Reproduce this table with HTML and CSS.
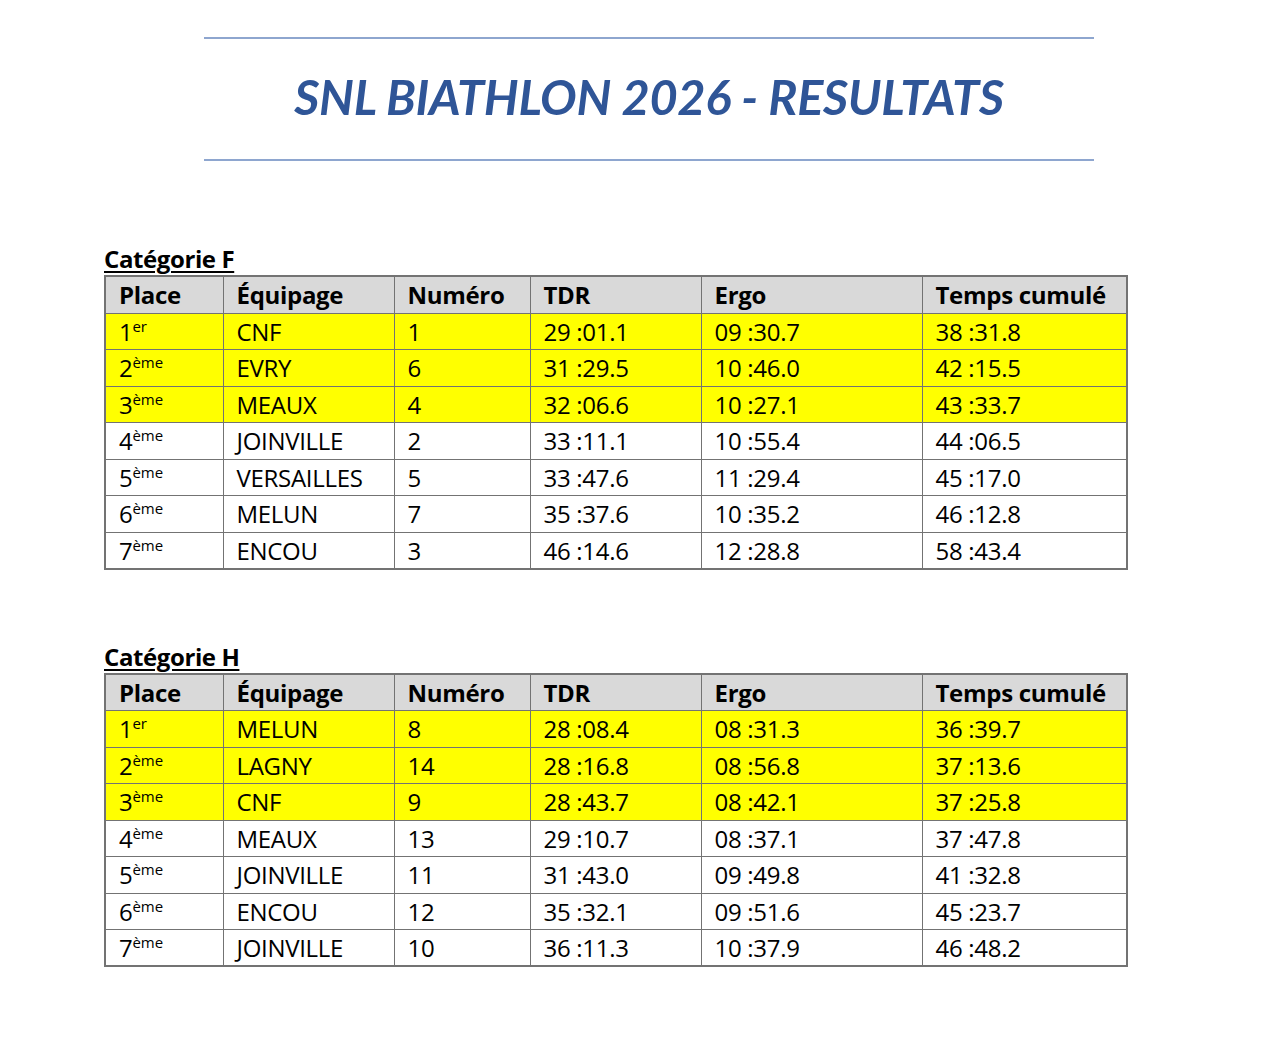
FILE: index.html
```html
<!DOCTYPE html>
<html lang="fr">
<head>
<meta charset="utf-8">
<title>SNL Biathlon 2026 - Résultats</title>
<link rel="stylesheet" href="styles.css">
</head>
<body>
<div class="page">
  <header class="banner">
    <h1 class="title">SNL BIATHLON 2026 - RESULTATS</h1>
  </header>

  <section class="cat cat-f">
    <h2 class="cat-title">Catégorie F</h2>
    <table class="results">
      <colgroup>
        <col class="c1"><col class="c2"><col class="c3"><col class="c4"><col class="c5"><col class="c6">
      </colgroup>
      <thead>
        <tr><th>Place</th><th>Équipage</th><th>Numéro</th><th>TDR</th><th>Ergo</th><th>Temps cumulé</th></tr>
      </thead>
      <tbody>
        <tr class="podium"><td>1<sup>er</sup></td><td>CNF</td><td>1</td><td>29 :01.1</td><td>09 :30.7</td><td>38 :31.8</td></tr>
        <tr class="podium"><td>2<sup>ème</sup></td><td>EVRY</td><td>6</td><td>31 :29.5</td><td>10 :46.0</td><td>42 :15.5</td></tr>
        <tr class="podium"><td>3<sup>ème</sup></td><td>MEAUX</td><td>4</td><td>32 :06.6</td><td>10 :27.1</td><td>43 :33.7</td></tr>
        <tr><td>4<sup>ème</sup></td><td>JOINVILLE</td><td>2</td><td>33 :11.1</td><td>10 :55.4</td><td>44 :06.5</td></tr>
        <tr><td>5<sup>ème</sup></td><td>VERSAILLES</td><td>5</td><td>33 :47.6</td><td>11 :29.4</td><td>45 :17.0</td></tr>
        <tr><td>6<sup>ème</sup></td><td>MELUN</td><td>7</td><td>35 :37.6</td><td>10 :35.2</td><td>46 :12.8</td></tr>
        <tr><td>7<sup>ème</sup></td><td>ENCOU</td><td>3</td><td>46 :14.6</td><td>12 :28.8</td><td>58 :43.4</td></tr>
      </tbody>
    </table>
  </section>

  <section class="cat cat-h">
    <h2 class="cat-title">Catégorie H</h2>
    <table class="results">
      <colgroup>
        <col class="c1"><col class="c2"><col class="c3"><col class="c4"><col class="c5"><col class="c6">
      </colgroup>
      <thead>
        <tr><th>Place</th><th>Équipage</th><th>Numéro</th><th>TDR</th><th>Ergo</th><th>Temps cumulé</th></tr>
      </thead>
      <tbody>
        <tr class="podium"><td>1<sup>er</sup></td><td>MELUN</td><td>8</td><td>28 :08.4</td><td>08 :31.3</td><td>36 :39.7</td></tr>
        <tr class="podium"><td>2<sup>ème</sup></td><td>LAGNY</td><td>14</td><td>28 :16.8</td><td>08 :56.8</td><td>37 :13.6</td></tr>
        <tr class="podium"><td>3<sup>ème</sup></td><td>CNF</td><td>9</td><td>28 :43.7</td><td>08 :42.1</td><td>37 :25.8</td></tr>
        <tr><td>4<sup>ème</sup></td><td>MEAUX</td><td>13</td><td>29 :10.7</td><td>08 :37.1</td><td>37 :47.8</td></tr>
        <tr><td>5<sup>ème</sup></td><td>JOINVILLE</td><td>11</td><td>31 :43.0</td><td>09 :49.8</td><td>41 :32.8</td></tr>
        <tr><td>6<sup>ème</sup></td><td>ENCOU</td><td>12</td><td>35 :32.1</td><td>09 :51.6</td><td>45 :23.7</td></tr>
        <tr><td>7<sup>ème</sup></td><td>JOINVILLE</td><td>10</td><td>36 :11.3</td><td>10 :37.9</td><td>46 :48.2</td></tr>
      </tbody>
    </table>
  </section>
</div>
</body>
</html>
```

FILE: styles.css
```css
html, body {
  margin: 0;
  padding: 0;
  background: #ffffff;
}

body {
  font-family: "Open Sans", "Liberation Sans", sans-serif;
  color: #000000;
}

.page {
  padding-top: 37px;
}

.banner {
  width: 890px;
  margin-left: 204px;
  height: 120px;
  border-top: 2px solid #8ea6cf;
  border-bottom: 2px solid #8ea6cf;
  display: flex;
  align-items: center;
  justify-content: center;
}

.title {
  margin: 0 0 6px 0;
  font-family: "Lato", "Liberation Sans", sans-serif;
  font-size: 48.7px;
  font-weight: 700;
  font-style: italic;
  color: #2f5597;
  letter-spacing: -0.3px;
  line-height: 1;
}

.cat {
  margin-left: 104px;
  width: 1022px;
}

.cat-f {
  margin-top: 82px;
}

.cat-h {
  margin-top: 71px;
}

.cat-title {
  margin: 0;
  font-size: 24px;
  font-weight: 700;
  line-height: 32px;
  letter-spacing: -0.4px;
  text-decoration: underline;
  text-decoration-thickness: 2px;
  text-underline-offset: 3px;
}

.results {
  width: 1022px;
  border-collapse: collapse;
  table-layout: fixed;
  border: 2px solid #737373;
}

.c1 { width: 118px; }
.c2 { width: 171px; }
.c3 { width: 136px; }
.c4 { width: 171px; }
.c5 { width: 221px; }
.c6 { width: 205px; }

.results thead tr { height: 37px; }
.results tbody tr { height: 36.5px; }

.results th,
.results td {
  border: 1.5px solid #737373;
  padding: 6px 0 0 13px;
  vertical-align: top;
  text-align: left;
  font-size: 24px;
  line-height: 24px;
  letter-spacing: -0.3px;
  white-space: nowrap;
}

.results th {
  background: #d9d9d9;
  font-weight: 700;
}

.results td {
  font-weight: 400;
}

.results tr.podium td {
  background: #ffff00;
}

.results sup {
  font-size: 15px;
  line-height: 0;
  vertical-align: 9px;
  letter-spacing: 0;
}
```
